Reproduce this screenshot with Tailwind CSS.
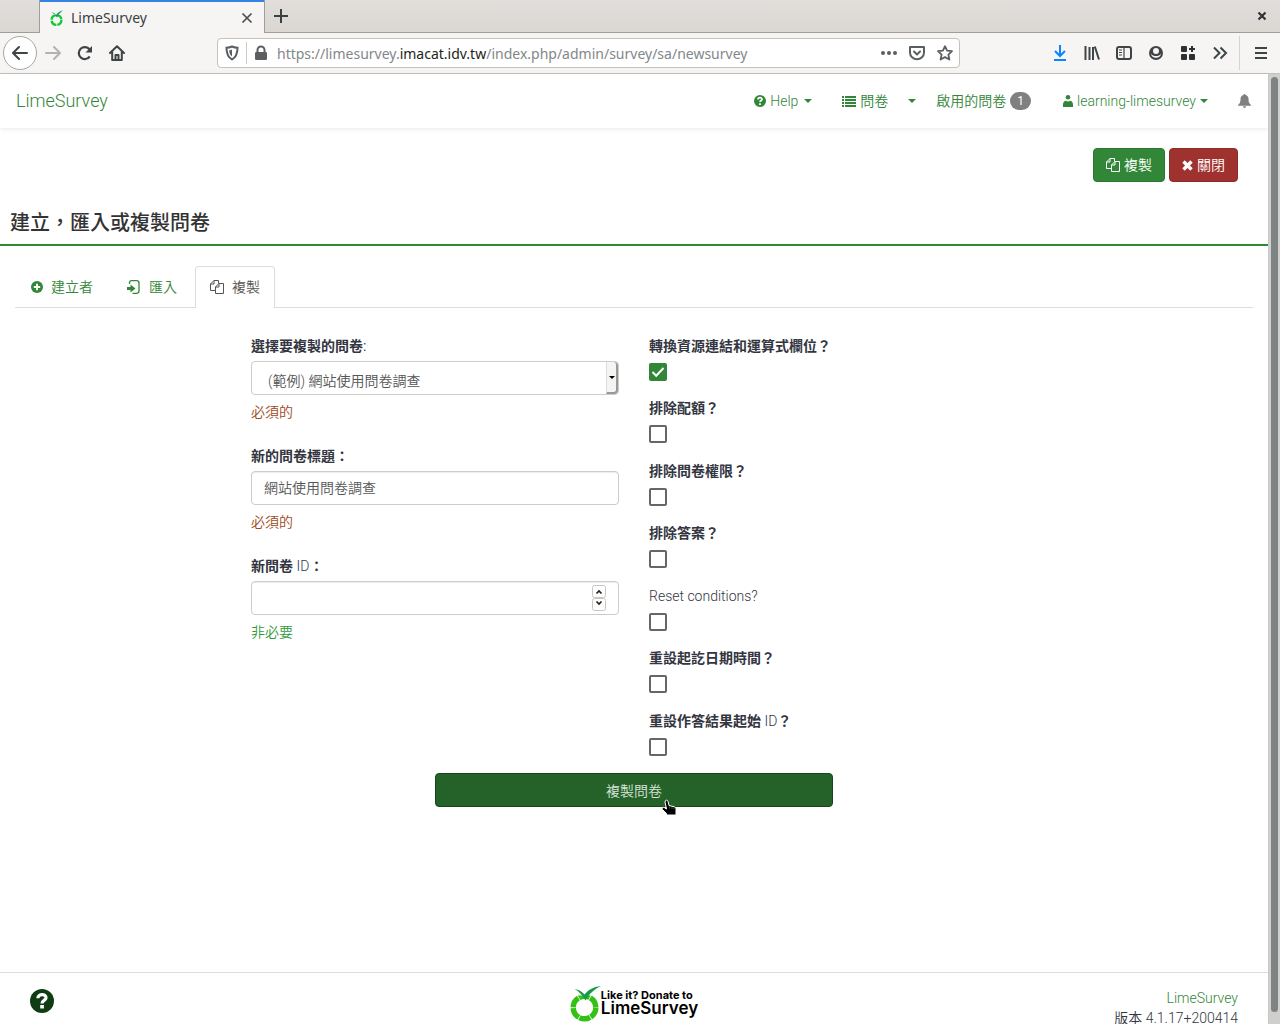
<!DOCTYPE html>
<html lang="zh-Hant">
<head>
<meta charset="utf-8">
<title>LimeSurvey</title>
<script src="https://cdn.jsdelivr.net/npm/@tailwindcss/browser@4"></script>
</head>
<body class="flex h-screen flex-col overflow-hidden bg-white font-['Roboto','Noto_Sans_CJK_TC',sans-serif] text-sm leading-5 font-[350] text-[#333641]">

<!-- Browser window -->
<header class="shrink-0 border-b border-[#c4c2bf] bg-[#f6f5f4] font-['Noto_Sans',sans-serif] font-normal text-[#3b4043]">
  <div class="flex h-[33px] bg-linear-to-b from-[#e1dedb] to-[#dad6d2]">
    <div class="w-10 border-r border-b border-[#a09e9b]"></div>
    <div class="flex w-[224px] items-center border-t-2 border-[#3584e4] bg-[#f6f5f4] pr-[11px] pl-2">
      <svg class="mr-[7px] size-4" viewBox="0 0 16 16" fill="none"><circle cx="8.500" cy="10" r="4.900" stroke="#14c83c" stroke-width="2.400" stroke-dasharray="6.600 1"/><path d="M3 1.500l12-1.500v5H6z" fill="#f6f5f4"/><path d="M3.500 2C5.500 2.500 7 3.500 8 5 10 2.500 12 1 15 .2 12 2.500 10.500 5 9 7.500 7.500 5.500 5.500 3.500 3.500 2Z" fill="#12a04c"/></svg>
      <span class="grow">LimeSurvey</span>
      <button aria-label="Close tab"><svg class="size-3" viewBox="0 0 12 12" stroke="#4a4f52" stroke-width="1.700"><path d="M1.500 1.500l9 9M10.500 1.500l-9 9"/></svg></button>
    </div>
    <div class="flex grow items-center justify-between border-b border-l border-[#a09e9b] pr-3 pl-2">
      <button aria-label="New tab"><svg class="size-4" viewBox="0 0 16 16" stroke="#3b4043" stroke-width="2"><path d="M8 1v14M1 8h14"/></svg></button>
      <button aria-label="Close window"><svg class="size-3" viewBox="0 0 12 12" stroke="#2e3436" stroke-width="2.200"><path d="M2.500 2.500l7 7M9.500 2.500l-7 7"/></svg></button>
    </div>
  </div>
  <div class="flex h-10 items-center pr-[11px] pl-[5px]">
    <nav class="flex items-center gap-4">
      <button aria-label="Back" class="-ml-0.5 flex size-[34px] items-center justify-center rounded-full border border-[#a9a7a5] bg-white"><svg class="size-4" viewBox="0 0 16 16" fill="none" stroke="#3f4447" stroke-width="2" stroke-linecap="round" stroke-linejoin="round"><path d="M15 8H1.500M7 2L1 8l6 6"/></svg></button>
      <button aria-label="Forward" class="-ml-2"><svg class="size-4" viewBox="0 0 16 16" fill="none" stroke="#b3b2b1" stroke-width="2" stroke-linecap="round" stroke-linejoin="round"><path d="M1 8h13.500M9 2l6 6-6 6"/></svg></button>
      <button aria-label="Reload"><svg class="size-4" viewBox="0 0 16 16" fill="none" stroke="#3f4447" stroke-width="2.200"><path d="M12.700 11.500A6 6 0 1 1 12.500 4.300"/><path d="M15 1v6.500H8.500z" fill="#3f4447" stroke="none"/></svg></button>
      <button aria-label="Home"><svg class="size-4" viewBox="0 0 16 16" fill="none" stroke="#3f4447" stroke-width="2" stroke-linejoin="round" stroke-linecap="round"><path d="M1 8l7-6.800L15 8M3.200 7v8h9.600V7"/><path d="M6.500 15v-5h3v5" /></svg></button>
    </nav>
    <div class="ml-[92px] flex h-[30px] w-[743px] items-center rounded border border-[#c8c1ba] bg-white pr-1.5 pl-1.5">
      <svg class="size-4" viewBox="0 0 16 16" fill="none" stroke="#5c5f61" stroke-width="2"><path d="M8 1.500c2 1 4 1.200 5.500 1.200 0 6-1.500 9.500-5.500 11.800C4 12.200 2.500 8.700 2.500 2.700 4 2.700 6 2.500 8 1.500Z"/><path d="M8 4.500v7C6 10 5.300 8 5.200 5.200 6.500 5.200 7.200 5 8 4.500Z" fill="#5c5f61" stroke="none"/></svg>
      <span class="mx-1.5 h-[22px] w-px bg-[#cfc9c3]"></span>
      <svg class="size-4" viewBox="0 0 16 16" fill="#5c5f61"><rect x="2" y="7" width="12" height="8" rx="1.300"/><path d="M4.500 8V5a3.500 3.500 0 0 1 7 0v3" fill="none" stroke="#5c5f61" stroke-width="2"/></svg>
      <span class="ml-2 grow pt-px text-sm text-[#83878a]">https://limesurvey.<span class="text-[#1c1f21]">imacat.idv.tw</span>/index.php/admin/survey/sa/newsurvey</span>
      <span class="flex items-center gap-3">
        <button aria-label="Page actions"><svg class="size-4" viewBox="0 0 16 16" fill="#5c5f61"><circle cx="2" cy="8" r="2"/><circle cx="8" cy="8" r="2"/><circle cx="14" cy="8" r="2"/></svg></button>
        <button aria-label="Save to Pocket"><svg class="size-4" viewBox="0 0 16 16" fill="none" stroke="#5c5f61" stroke-width="2" stroke-linecap="round" stroke-linejoin="round"><path d="M1 2h14v5.500a7 6.800 0 0 1-14 0Z"/><path d="M5 6.500l3 3 3-3"/></svg></button>
        <button aria-label="Bookmark"><svg class="size-4" viewBox="0 0 16 16" fill="none" stroke="#5c5f61" stroke-width="1.800" stroke-linejoin="round"><path d="M8 1.200l2.100 4.400 4.900.6-3.600 3.400 1 4.900L8 12.100 3.600 14.500l1-4.900L1 6.200l4.900-.6Z"/></svg></button>
      </span>
    </div>
    <nav class="ml-auto flex items-center gap-4">
      <button aria-label="Downloads"><svg class="size-4" viewBox="0 0 16 16" fill="none" stroke="#0a84ff" stroke-width="2"><path d="M8 0v11M3 6l5 5 5-5M2 15h12"/></svg></button>
      <button aria-label="Library"><svg class="size-4" viewBox="0 0 16 16" fill="none" stroke="#3f4447"><path d="M1.500 1v14M5.500 2v13M9 2v13M10.800 1.500L15 14.500" stroke-width="2"/></svg></button>
      <button aria-label="Sidebars"><svg class="size-4" viewBox="0 0 16 16" fill="none" stroke="#3f4447" stroke-width="2"><rect x="1" y="2" width="14" height="12" rx="2"/><path d="M8 2v12" stroke-width="1.200"/><path d="M3 5h3M3 7.500h3M3 10h3" stroke-width="1"/></svg></button>
      <button aria-label="Account"><svg class="size-4" viewBox="0 0 16 16"><circle cx="8" cy="8" r="7" fill="#3f4447"/><path d="M2.800 8.500a5.300 5.300 0 0 0 10.400 0C12 10.500 10 11 8 11S4 10.500 2.800 8.500Z" fill="#f6f5f4"/><circle cx="8" cy="6" r="3" fill="#f6f5f4"/></svg></button>
      <button aria-label="Extensions"><svg class="size-4" viewBox="0 0 16 16" fill="#2e3133"><rect x="1" y="1" width="6" height="6" rx="1"/><rect x="1" y="9" width="6" height="6" rx="1"/><rect x="9" y="9" width="6" height="6" rx="1"/><path d="M11 1h2v2h2v2h-2v2h-2V5H9V3h2z"/></svg></button>
      <button aria-label="More tools"><svg class="size-4" viewBox="0 0 16 16" fill="none" stroke="#3f4447" stroke-width="2"><path d="M2 2.500L7.500 8 2 13.500M8.500 2.500L14 8l-5.500 5.500"/></svg></button>
      <span class="-mr-[3px] -ml-[5px] h-[34px] w-px bg-[#d5d3d1]"></span>
      <button aria-label="Menu"><svg class="size-4" viewBox="0 0 16 16" stroke="#3f4447" stroke-width="2"><path d="M2 3h12M2 8h12M2 13h12"/></svg></button>
    </nav>
  </div>
</header>

<div class="flex min-h-0 grow">
  <div class="flex min-w-0 grow flex-col">
    <!-- Site navigation -->
    <nav class="flex h-[54px] shrink-0 items-center px-4 text-[#328637] shadow-[0_1px_5px_rgba(50,65,60,0.12)]">
      <a href="#" class="text-lg font-light">LimeSurvey</a>
      <a href="#" class="ml-auto flex items-center font-light"><svg class="mr-1 size-3" viewBox="0 0 12 12"><circle cx="6" cy="6" r="6" fill="#328637"/><path d="M4 4.600C4 2 8.200 2.200 8 4.300 7.900 5.500 6 5.500 6 7.100" fill="none" stroke="#fff" stroke-width="1.700"/><path d="M5.100 8.200h1.800v1.700H5.100z" fill="#fff"/></svg>Help<svg class="ml-1.5 h-1 w-2" viewBox="0 0 8 4" fill="#328637"><path d="M0 0h8L4 4z"/></svg></a>
      <a href="#" class="ml-[30px] flex items-center"><svg class="mr-1 h-[11px] w-[14px]" viewBox="0 0 14 11" fill="#328637"><path d="M0 0h2v2H0zM3 0h11v2H3zM0 3h2v2H0zM3 3h11v2H3zM0 6h2v2H0zM3 6h11v2H3zM0 9h2v2H0zM3 9h11v2H3z"/></svg>問卷</a>
      <a href="#" aria-label="問卷選單" class="ml-5"><svg class="h-1 w-2" viewBox="0 0 8 4" fill="#328637"><path d="M0 0h8L4 4z"/></svg></a>
      <a href="#" class="ml-5 flex items-center">啟用的問卷<span class="ml-1 rounded-full bg-[#808080] px-[7px] py-px text-xs leading-4 font-normal text-white">1</span></a>
      <a href="#" class="ml-8 flex items-center font-light"><svg class="mr-1 h-3 w-[10px]" viewBox="0 0 10 12" fill="#328637"><circle cx="5" cy="2.300" r="2.300"/><path d="M0 12V9.500C0 7 1.500 5.700 3 5.700 4 6.700 6 6.700 7 5.700c1.500 0 3 1.300 3 3.800V12Z"/></svg>learning-limesurvey<svg class="ml-1 h-1 w-2" viewBox="0 0 8 4" fill="#328637"><path d="M0 0h8L4 4z"/></svg></a>
      <a href="#" aria-label="通知" class="mr-px ml-[30px]"><svg class="h-[14px] w-[13px]" viewBox="0 0 13 14" fill="#808080"><path d="M6.500 0c.7 0 1 .5 1 1C9.500 1.500 10.500 3 10.500 5c0 3 .5 4.500 2.500 6v.8H0V11c2-1.500 2.500-3 2.500-6 0-2 1-3.500 3-4 0-.5.3-1 1-1ZM5 12.300h3C8 13.500 7.200 14 6.500 14S5 13.500 5 12.300Z"/></svg></a>
    </nav>

    <div class="flex justify-end gap-1 px-[30px] pt-5">
      <button class="flex h-[34px] items-center gap-1 rounded border border-[#2c7730] bg-[#328637] px-3 text-white"><svg class="size-[14px]" viewBox="0 0 14 14" fill="none" stroke="currentColor"><path d="M8.500 3.500V.5H4L.5 4v6.500h5M4 .5V4H.5M5.500 13.500h8v-10H9L5.500 7ZM9 3.500V7H5.500"/></svg>複製</button>
      <button class="flex h-[34px] items-center gap-1 rounded border border-[#8a2c28] bg-[#9f322e] px-3 text-white"><svg class="size-[11px]" viewBox="0 0 11 11" stroke="#fff" stroke-width="3.400"><path d="M1.500 1.500l8 8M9.500 1.500l-8 8"/></svg>關閉</button>
    </div>

    <h1 class="mt-5 border-b-2 border-[#328637] px-[10px] pt-2 pb-2 text-xl leading-[26px] font-medium text-[#333]">建立，匯入或複製問卷</h1>

    <ul class="mx-[15px] mt-5 flex h-[42px] border-b border-[#ddd] text-[#328637]">
      <li><a href="#" class="flex h-[42px] items-center px-4"><svg class="mr-2 size-3" viewBox="0 0 12 12"><circle cx="6" cy="6" r="6" fill="#328637"/><path d="M6 2.800v6.400M2.800 6h6.400" stroke="#fff" stroke-width="2"/></svg>建立者</a></li>
      <li class="ml-0.5"><a href="#" class="flex h-[42px] items-center px-4"><svg class="mr-2 h-[14px] w-[14px]" viewBox="0 0 14 14" fill="none" stroke="#328637" stroke-width="1.300"><path d="M2.500 4V2.500Q2.500.7 4.500.7H9.500q2.500 0 2.500 2.500v7.600q0 2.500-2.500 2.500H5.500"/><path d="M0 7h3.500V4.500L8.500 8.500 3.500 12.500V10H0Z" fill="#328637" stroke="none"/></svg>匯入</a></li>
      <li class="ml-0.5"><a href="#" aria-current="page" class="flex h-[42px] items-center rounded-t border border-b-0 border-[#ddd] bg-white px-[14px] pb-px text-[#555]"><svg class="mr-2 size-[14px]" viewBox="0 0 14 14" fill="none" stroke="currentColor"><path d="M8.500 3.500V.5H4L.5 4v6.500h5M4 .5V4H.5M5.500 13.500h8v-10H9L5.500 7ZM9 3.500V7H5.500"/></svg>複製</a></li>
    </ul>

    <!-- Copy survey form -->
    <form class="grid grid-cols-6 px-[37px] pt-7">
      <div class="col-span-2 col-start-2 flex flex-col gap-6 px-[15px]">
        <div>
          <label for="source" class="mb-[5px] block font-bold">選擇要複製的問卷<span class="font-normal">:</span></label>
          <div class="relative">
            <select id="source" class="block h-[34px] w-full appearance-none rounded border border-[#ccc] bg-white px-4 pt-1.5 text-[#555]"><option>(範例) 網站使用問卷調查</option></select>
            <span class="pointer-events-none absolute inset-y-px right-px flex w-3 items-center justify-center rounded-r-sm border-r-2 border-b-2 border-l border-r-[#999] border-b-[#999] border-l-[#ddd] bg-[#f4f4f2]"><svg class="h-[3px] w-[6px]" viewBox="0 0 6 3"><path d="M0 0h6L3 3z"/></svg></span>
          </div>
          <p class="mt-[7px] text-[#9c4b1c]">必須的</p>
        </div>
        <div>
          <label for="title" class="mb-[5px] block font-bold">新的問卷標題：</label>
          <input id="title" type="text" value="網站使用問卷調查" class="block h-[34px] w-full rounded border border-[#ccc] px-3 pb-0.5 text-[#555] shadow-[inset_0_1px_1px_rgba(0,0,0,0.075)]">
          <p class="mt-[7px] text-[#9c4b1c]">必須的</p>
        </div>
        <div>
          <label for="newid" class="mb-[5px] block font-bold">新問卷 <span class="font-light">ID</span>：</label>
          <div class="relative">
            <input id="newid" type="number" class="block h-[34px] w-full appearance-none rounded border border-[#ccc] px-3 shadow-[inset_0_1px_1px_rgba(0,0,0,0.075)]">
            <svg class="pointer-events-none absolute top-1 right-[13px] h-[26px] w-[14px]" viewBox="0 0 14 26" fill="#fff" stroke="#cbc5bf"><rect x=".5" y=".5" width="13" height="12" rx="2"/><rect x=".5" y="13.500" width="13" height="12" rx="2"/><path d="M4.500 8.500L7 6l2.500 2.500M4.500 16.500L7 19l2.500-2.500" fill="none" stroke="#222" stroke-width="1.700"/></svg>
          </div>
          <p class="mt-[7px] text-[#2f9a3c]">非必要</p>
        </div>
      </div>

      <div class="col-span-2 grid h-[437px] auto-rows-fr pl-[15px]">
        <div class="relative"><label for="c1" class="mb-[7px] block font-bold">轉換資源連結和運算式欄位？</label><input id="c1" type="checkbox" checked class="block size-[18px] appearance-none rounded-xs bg-[#328637]"><svg class="pointer-events-none absolute top-[27px] left-0 size-[18px]" viewBox="0 0 18 18" fill="none" stroke="#fff" stroke-width="2"><path d="M3.500 9l3.700 3.700L14.500 5"/></svg></div>
        <div><label for="c2" class="mb-[7px] block font-bold">排除配額？</label><input id="c2" type="checkbox" class="block size-[18px] appearance-none rounded-xs border-2 border-[#666]"></div>
        <div><label for="c3" class="mb-[7px] block font-bold">排除問卷權限？</label><input id="c3" type="checkbox" class="block size-[18px] appearance-none rounded-xs border-2 border-[#666]"></div>
        <div><label for="c4" class="mb-[7px] block font-bold">排除答案？</label><input id="c4" type="checkbox" class="block size-[18px] appearance-none rounded-xs border-2 border-[#666]"></div>
        <div><label for="c5" class="mb-[7px] block">Reset conditions?</label><input id="c5" type="checkbox" class="block size-[18px] appearance-none rounded-xs border-2 border-[#666]"></div>
        <div><label for="c6" class="mb-[7px] block font-bold">重設起訖日期時間？</label><input id="c6" type="checkbox" class="block size-[18px] appearance-none rounded-xs border-2 border-[#666]"></div>
        <div><label for="c7" class="mb-[7px] block font-bold">重設作答結果起始 <span class="font-light">ID</span>？</label><input id="c7" type="checkbox" class="block size-[18px] appearance-none rounded-xs border-2 border-[#666]"></div>
      </div>

      <div class="relative col-span-2 col-start-3">
        <button class="block h-[34px] w-full rounded border border-[#16461a] bg-[#256229] pt-0.5 text-[#d8e4d8]">複製問卷</button>
        <svg class="pointer-events-none absolute top-[26px] left-[226px] h-[18px] w-4" viewBox="0 0 16 18"><path d="M4.500 1.500C6 .5 7 1.500 7.200 3L8 6.500l5 1.200c1.500.4 2 1 2 2.500V16H5.500v-1.500L1.500 10.500C.5 9 2 7.800 3.200 8.500L5.500 10 4 3Z" fill="#000" stroke="#fff"/><path d="M8.500 7.500v2M11 8v2M13 8.500v2" stroke="#777" stroke-width=".6"/></svg>
      </div>
    </form>

    <footer class="mt-auto grid h-[52px] shrink-0 grid-cols-3 border-t border-[#ddd] px-[30px]">
      <a href="#" aria-label="說明" class="pt-4"><svg class="size-6" viewBox="0 0 24 24"><circle cx="12" cy="12" r="12" fill="#103c14"/><path d="M7.800 9.200C8 4.200 16.500 4.500 16 9c-.3 2.500-4 2.500-4 5.500" fill="none" stroke="#fff" stroke-width="3.200"/><path d="M10.200 16h3.700v3.500h-3.700z" fill="#fff"/></svg></a>
      <a href="#" class="flex items-start justify-center pt-[13px] font-['Inter',sans-serif] text-black">
        <svg class="h-9 w-[31px]" viewBox="0 0 31 36" fill="none"><circle cx="14.500" cy="21.500" r="11.300" stroke="#35c016" stroke-width="5.400" stroke-dasharray="11.100 .7"/><path d="M3 1l26-1v9.500H8.500z" fill="#fff"/><path d="M4.500 3C8.500 3.500 12 5.500 14.500 8.500 18 4 23 1 31 0 24.500 3 19 8 15.500 14.500 12.500 9 9 5.500 4.500 3Z" fill="#159a45"/></svg>
        <span class="flex flex-col pt-0.5"><span class="text-[11px] leading-[14px] font-bold">Like it? Donate to</span><span class="text-[17px] leading-3 font-semibold">LimeSurvey</span></span>
      </a>
      <div class="pt-[15px] text-right"><a href="#" class="block font-light text-[#328637]">LimeSurvey</a><span class="block">版本 4.1.17+200414</span></div>
    </footer>
  </div>
  <div class="w-3 shrink-0 border-l border-[#c9c9c7] bg-[#cfcfcd] px-0.5 pt-[3px] pb-3"><div class="h-full rounded-full bg-[#7e8383]"></div></div>
</div>
</body>
</html>
